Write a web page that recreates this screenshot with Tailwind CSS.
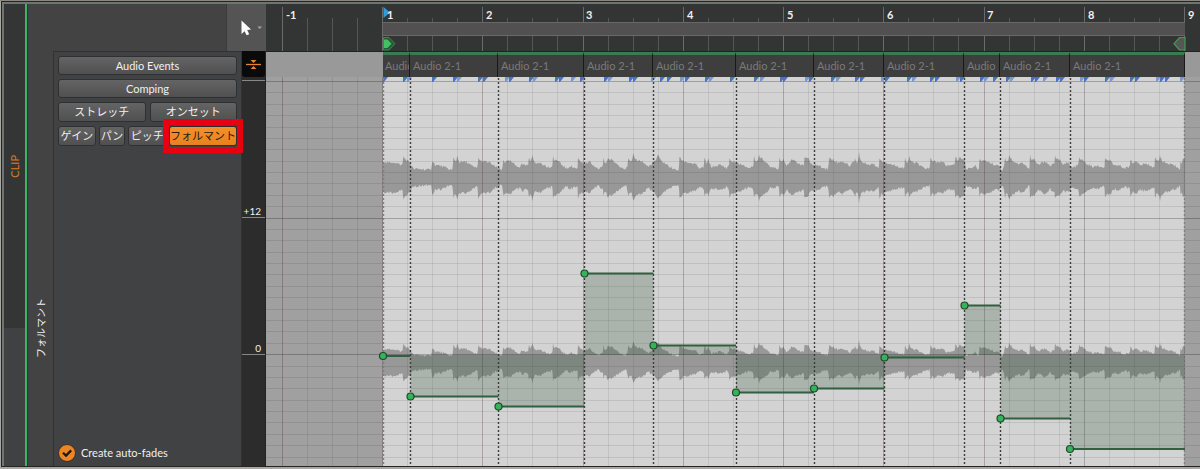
<!DOCTYPE html>
<html lang="ja">
<head>
<meta charset="utf-8">
<meta name="viewport" content="width=device-width, initial-scale=1">
<title>Clip editor</title>
<script src="https://cdn.jsdelivr.net/npm/@tailwindcss/browser@4"></script>
</head>
<body class="flex min-h-screen flex-col bg-[#aaa7a2] font-[Lato,'Noto_Sans_CJK_JP',sans-serif] text-[11px] text-[#f0f0f0]">
<div class="h-px bg-[#8b8780]"></div>
<main class="mb-[2px] ml-px flex flex-1 border-y border-l border-[#252525]">
<div class="flex min-w-0 flex-1 border-t-2 border-l-2 border-[#6c7773] bg-[#434344]">

  <!-- Mode strip -->
  <div class="flex w-[21px] shrink-0 flex-col bg-[#404142]">
    <div class="flex grow-[324] basis-0 items-center justify-center bg-[#343636]">
      <span class="rotate-180 leading-none text-[#d97a2a] [text-orientation:sideways] [writing-mode:vertical-rl]">CLIP</span>
    </div>
    <div class="grow-[138] basis-0"></div>
  </div>
  <div class="w-[3px] shrink-0 border-r border-[#333] bg-[#3db45d]"></div>

  <!-- Inspector -->
  <section class="flex w-[238px] shrink-0 flex-col">
    <div class="flex h-[47px] shrink-0 justify-end">
      <button aria-label="Pointer tool" class="flex w-[40px] items-center border-l border-[#3a3a3a] bg-[#545454]">
        <svg class="h-[47px] w-[39px]" viewBox="0 0 39 47">
          <path d="M14.500 16.500V30L17.600 27.200L19.600 31.300L22.200 30.200L20.200 26L24 25.600Z" fill="#fff"/>
          <path d="M30.500 22.500H35L32.700 25Z" fill="#a5a5a5"/>
        </svg>
      </button>
    </div>
    <div class="flex flex-1">
      <div class="flex w-[25px] shrink-0 items-start justify-center pt-[247px]">
        <span class="rotate-180 text-[10px] leading-none [text-orientation:sideways] [writing-mode:vertical-rl]">フォルマント</span>
      </div>
      <div class="flex w-[189px] shrink-0 flex-col gap-1 border-x border-t border-[#323232] bg-[#414243] px-1 pt-1">
        <button class="h-[19px] rounded-[3px] border border-[#303030] bg-linear-to-b from-[#646464] to-[#505050] leading-4">Audio Events</button>
        <button class="h-[19px] rounded-[3px] border border-[#303030] bg-linear-to-b from-[#646464] to-[#505050] leading-4">Comping</button>
        <div class="flex gap-1">
          <button class="h-[20px] flex-1 rounded-[3px] border border-[#303030] bg-linear-to-b from-[#646464] to-[#505050] leading-4">ストレッチ</button>
          <button class="h-[20px] flex-1 rounded-[3px] border border-[#303030] bg-linear-to-b from-[#646464] to-[#505050] leading-4">オンセット</button>
        </div>
        <div class="flex gap-[3px] leading-4 whitespace-nowrap">
          <button class="h-[20px] w-[38px] rounded-[3px] border border-[#303030] bg-linear-to-b from-[#646464] to-[#505050]">ゲイン</button>
          <button class="h-[20px] w-[27px] rounded-[3px] border border-[#303030] bg-linear-to-b from-[#646464] to-[#505050]">パン</button>
          <button class="h-[20px] w-[38px] rounded-[3px] border border-[#303030] bg-linear-to-b from-[#646464] to-[#505050]">ピッチ</button>
          <div class="relative flex flex-1">
            <button class="flex h-[20px] flex-1 items-center justify-center rounded-[3px] border border-[#303030] bg-linear-to-b from-[#f58f2b] to-[#e8821d] text-[#241a10]">フォルマント</button>
            <span class="pointer-events-none absolute -inset-x-[6px] -inset-y-[7px] border-[6px] border-[#e60012]"></span>
          </div>
        </div>
        <label class="mt-auto mb-1 flex items-center gap-[5px]">
          <span class="grid">
            <input type="checkbox" checked class="col-start-1 row-start-1 size-[18px] appearance-none rounded-full border border-[#3a3028] bg-[#ee8525]">
            <svg class="pointer-events-none col-start-1 row-start-1 size-[18px]" viewBox="0 0 18 18"><path d="M5 8.8L8 11.600L13.200 6.400" fill="none" stroke="#1d1712" stroke-width="2.2"/></svg>
          </span>
          Create auto-fades
        </label>
      </div>
      <!-- Value scale -->
      <div class="flex flex-1 flex-col border-r border-[#222] bg-[#2c2c2c] text-[10px] leading-3">
        <button aria-label="Collapse lanes" class="h-[26px] shrink-0 rounded-b-[3px] bg-[#0a0a0a]">
          <svg class="h-[25px] w-full" viewBox="0 0 23 25">
            <path d="M4 12.5H19" stroke="#e8832a" stroke-width="1.3"/>
            <path d="M8.500 8H14.500L11.500 11ZM8.500 17H14.500L11.500 14Z" fill="#e8832a"/>
          </svg>
        </button>
        <div class="h-[4px] shrink-0 border-b border-[#8a8683]"></div>
        <div class="flex grow-[137] basis-0 items-end justify-end border-b border-[#8a8683] pr-1">+12</div>
        <div class="flex grow-[136] basis-0 items-end justify-end border-b border-[#8a8683] pr-1">0</div>
        <div class="grow-[112] basis-0"></div>
      </div>
    </div>
  </section>

  <!-- Timeline -->
  <section class="flex min-w-0 flex-1 flex-col bg-[#333]">
    <div class="grid h-[47px] shrink-0">
      <svg id="ruler" class="col-start-1 row-start-1 h-[47px] w-full" viewBox="266 4 934 47" preserveAspectRatio="none"></svg>
      <div class="col-start-1 row-start-1 grid grid-cols-[17fr_100fr_100fr_100fr_101fr_100fr_100fr_100fr_101fr_100fr_15fr] pt-[5px] leading-3 font-bold">
        <span></span><span class="pl-[3px]">-1</span><span class="pl-1">1</span><span class="pl-[3px]">2</span><span class="pl-[3px]">3</span><span class="pl-[3px]">4</span><span class="pl-[3px]">5</span><span class="pl-[3px]">6</span><span class="pl-[3px]">7</span><span class="pl-[3px]">8</span><span class="pl-[3px]">9</span>
      </div>
    </div>
    <div class="grid h-[26px] shrink-0 grid-cols-[117fr_27fr_88fr_86fr_69fr_83fr_78fr_70fr_80fr_36fr_70fr_115fr_15fr] border-t border-[#222] bg-[#3e3e3e] leading-[21px] whitespace-nowrap text-[#7a7a7a]">
      <span class="bg-[#999]"></span>
      <span class="min-w-0 overflow-hidden border-t-[3px] border-r border-t-[#397d4f] border-r-[#191919] pl-[2px]">Audio</span>
      <span class="min-w-0 overflow-hidden border-t-[3px] border-r border-t-[#397d4f] border-r-[#191919] pl-[3px]">Audio 2-1</span>
      <span class="min-w-0 overflow-hidden border-t-[3px] border-r border-t-[#397d4f] border-r-[#191919] pl-[3px]">Audio 2-1</span>
      <span class="min-w-0 overflow-hidden border-t-[3px] border-r border-t-[#397d4f] border-r-[#191919] pl-[3px]">Audio 2-1</span>
      <span class="min-w-0 overflow-hidden border-t-[3px] border-r border-t-[#397d4f] border-r-[#191919] pl-[3px]">Audio 2-1</span>
      <span class="min-w-0 overflow-hidden border-t-[3px] border-r border-t-[#397d4f] border-r-[#191919] pl-[3px]">Audio 2-1</span>
      <span class="min-w-0 overflow-hidden border-t-[3px] border-r border-t-[#397d4f] border-r-[#191919] pl-[3px]">Audio 2-1</span>
      <span class="min-w-0 overflow-hidden border-t-[3px] border-r border-t-[#397d4f] border-r-[#191919] pl-[3px]">Audio 2-1</span>
      <span class="min-w-0 overflow-hidden border-t-[3px] border-r border-t-[#397d4f] border-r-[#191919] pl-[3px]">Audio</span>
      <span class="min-w-0 overflow-hidden border-t-[3px] border-r border-t-[#397d4f] border-r-[#191919] pl-[3px]">Audio 2-1</span>
      <span class="min-w-0 overflow-hidden border-t-[3px] border-r border-t-[#397d4f] border-r-[#191919] pl-[3px]">Audio 2-1</span>
      <span class="bg-[#999]"></span>
    </div>
    <div class="grid flex-1 grid-rows-[minmax(0,1fr)]">
      <svg id="lane" class="h-full min-h-0 w-full" viewBox="266 77 934 389" preserveAspectRatio="none"></svg>
    </div>
  </section>
</div>
</main>

<script>
const START = 383, END = 1185, BAR = 100.25;
const rect = (x, y, w, h, f) => `<rect x="${x}" y="${y}" width="${w}" height="${h}" fill="${f}"/>`;

// Ruler: beat ticks, loop band, play and loop markers
let r = rect(266, 4, 934, 47, '#333434');
for (let i = -4; i <= 32; i++) {
  const x = Math.round(START + i * BAR / 4) - 1, bar = i % 4 === 0;
  r += rect(x, bar ? 7 : 18, 1, bar ? 44 : 33, bar ? '#6a6a6a' : '#565656');
}
r += rect(START, 22, END - START, 14, '#686868') + rect(START, 23, END - START, 12, '#525050');
r += '<path d="M383.500 7V18L390 12.500Z" fill="#2f9be0"/>';
r += '<path d="M383.500 37.500H389L395 43.700L389 50H383.500Z" fill="#245c36" stroke="#3a8a50"/><path d="M384 39.500H387.500L391.500 43.700L387.500 48H384Z" fill="#43c065"/>';
r += '<path d="M1185 37.500H1179.500L1174 43.700L1179.500 50H1185Z" fill="#565656" stroke="#3aa057" stroke-width="1.2"/>';
document.getElementById('ruler').innerHTML = r;

// Waveform envelope: [origin, offset in thirds of a pixel, half height, ...]
const env = [
 [370, 38,16,50,15,70,16,85,14,95,13,100,23,105,19,118,16,120,15,130,9,150,9,183,8,187,18,195,13,215,12,235,9,246,8,250,22,256,17,262,24,268,16,290,16,310,11,320,10,325,23,330,17,350,16,362,15,375,11,385,10,393,8,400,21,403,16,420,17,435,13,450,11,455,14,465,13,473,13,476,22,480,17,488,26,495,14,510,16,530,11,545,10,549,22,553,18,560,18,580,12,590,9],
 [570, 0,12,15,10,22,9,24,22,30,17,45,14,60,16,75,10,85,9,98,12,100,22,105,15,113,20,125,18,145,13,165,9,175,20,182,16,190,25,200,18,215,17,235,11,250,16,260,20,265,23,275,17,300,11,315,8,325,8,328,22,340,17,360,15,375,14,390,9,400,11,403,22,410,15,415,20,425,11,450,13,470,10,476,12,478,22,485,16,497,16,520,12,540,10,548,12,552,21,560,17,567,24,580,18,590,16,600,10,612,11,625,9,628,22,635,17,641,20,650,13,665,18,685,15,700,12,703,21,716,20,722,14,740,13,755,11,770,9,778,21,785,18,790,20,805,15,815,17,840,12,852,17,855,20,860,16,867,26,875,16,890,14,910,14,925,10,928,22],
 [880, 5,17,13,16,30,14,50,12,72,10,75,21,82,15,88,23,95,16,110,15,125,11,148,9,151,22,158,16,163,20,172,15,190,16,200,12,222,13,226,23,232,18,238,22,253,18,258,9,270,10,285,12,295,9,298,21,305,16,315,18,330,15,345,13,358,13,365,8,375,21,380,17,388,24,400,17,415,14,430,15,447,9,450,22,457,18,463,20,475,13,495,17,510,12,522,15,525,21,535,18,540,18,550,14,565,15,575,10,590,12,598,21,610,17,620,14,640,11,655,12,672,9,675,21,682,17,690,18,700,12,715,13,735,10,748,11,751,21,758,15,765,17,780,13,800,14,822,11,825,20,832,17,840,24,850,16,865,14,885,12,900,9,901,20,905,15,908,20,914,18]
];
const pts = [];
for (const [o, ...v] of env) for (let i = 0; i < v.length; i += 2) pts.push([o + v[i] / 3, v[i + 1]]);
function level(x) {
  let i = 1;
  while (i < pts.length - 1 && pts[i][0] < x) i++;
  const [a, p] = pts[i - 1], [b, q] = pts[i];
  let t = Math.min(1, Math.max(0, (x - a) / (b - a)));
  // Attacks are narrow spikes: leave and reach them steeply
  if (p >= 20) t = Math.pow(t, 0.5);
  else if (q >= 20) t = t * t * t;
  return p + (q - p) * t;
}
const noise = n => { const s = Math.sin(n * 12.9898) * 43758.5453; return (s - Math.floor(s)) * 2.4 - 1.2; };
function wave(cy, k) {
  const top = [], bottom = [];
  for (let x = START; x <= END; x += 0.5) {
    const h = level(x);
    top.push(`${x} ${(cy - (h + noise(Math.floor(x))) * k).toFixed(1)}`);
    bottom.unshift(`${x} ${(cy + (h - 1 + noise(Math.floor(x) + 999)) * k).toFixed(1)}`);
  }
  return `<path d="M${top.join('L')}L${bottom.join('L')}Z" fill="#989898"/>`;
}

let s = rect(266, 77, 934, 389, '#a0a0a0') + rect(START, 77, END - START, 389, '#d3d3d3');
s += wave(178, 1) + wave(363, 0.88);

// Grid
for (let i = 0; i < 34; i++) {
  const major = i % 12 === 0;
  s += rect(266, Math.round(81 + i * 11.38), 934, 1, major ? 'rgba(0,0,0,.24)' : 'rgba(0,0,0,.09)');
}
for (let i = -4; i <= 32; i++) {
  const bar = i % 4 === 0;
  s += rect(Math.round(START + i * BAR / 4) - 1, 77, 1, 389, bar ? 'rgba(60,40,40,.28)' : 'rgba(0,0,0,.08)');
}

// Onset marks
const onsets = [383,403,407,432,453,457,478,483,505,509,529,533,555,559,571,580,604,608,629,633,651,660,667,680,685,705,709,730,754,760,780,783,805,809,831,836,855,860,881,885,907,912,930,935,956,960,980,984,993,1006,1010,1031,1035,1043,1056,1060,1080,1084,1105,1110,1130,1135,1156,1160,1165,1180];
onsets.forEach((x, i) => {
  s += `<path d="M${x} 77H${x + 5}L${x + 1} 82H${x}Z" fill="${i % 3 === 2 ? '#7d98d0' : '#4a72c4'}"/>`;
});

// Formant steps
const ev = [[383,356],[410.5,396.5],[498.5,406.5],[584.5,273.5],[653.5,345.5],[736,392.5],[814,388.5],[884.5,357.5],[964.5,305.5],[1000.5,418.5],[1070,449],[1185]];
for (let i = 0; i < 11; i++) {
  const [x, y] = ev[i], w = ev[i + 1][0] - x;
  s += rect(x, Math.min(y, 355), w, Math.abs(y - 355), 'rgba(40,85,55,.24)');
}
ev.forEach(([x], i) => {
  const edge = i === 0 || i === 11;
  s += `<path d="M${Math.floor(x) + (i === 11 ? -.5 : .5)} 78V466" stroke="${edge ? '#808080' : '#3c3c3c'}" stroke-width="1.4" stroke-dasharray="2 2"/>`;
});
for (let i = 0; i < 11; i++) {
  const [x, y] = ev[i];
  s += `<path d="M${x} ${y}H${ev[i + 1][0]}" stroke="#315f41" stroke-width="2"/>`;
}
for (let i = 0; i < 11; i++) {
  const [x, y] = ev[i];
  s += `<circle cx="${x}" cy="${y}" r="3.500" fill="#35b35b" stroke="#1e4a2c" stroke-width="1.2"/>`;
}
document.getElementById('lane').innerHTML = s;
</script>
</body>
</html>
